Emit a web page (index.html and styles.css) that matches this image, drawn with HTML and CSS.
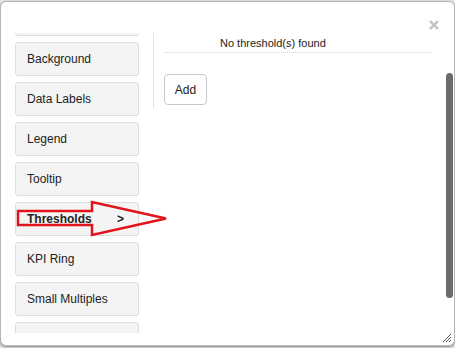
FILE: index.html
```html
<!DOCTYPE html>
<html lang="en">
<head>
    <meta charset="UTF-8">
    <meta name="viewport" content="width=device-width, initial-scale=1.0">
    <title>Format options</title>
    <link rel="stylesheet" href="styles.css">
</head>
<body>
    <div class="dialog">
        <div class="dialog-body">
            <!-- Left menu (scrolled a little, first and last items cut by the edge) -->
            <div class="nav">
                <div class="nav-list">
                    <div class="nav-item"></div>
                    <div class="nav-item">Background</div>
                    <div class="nav-item">Data Labels</div>
                    <div class="nav-item">Legend</div>
                    <div class="nav-item">Tooltip</div>
                    <div class="nav-item active">Thresholds <span class="caret">&gt;</span></div>
                    <div class="nav-item">KPI Ring</div>
                    <div class="nav-item">Small Multiples</div>
                    <div class="nav-item"></div>
                </div>
            </div>

            <!-- Right panel -->
            <div class="panel">
                <div class="empty-row">No threshold(s) found</div>
                <button class="btn-add">Add</button>
            </div>
        </div>
    </div>

    <!-- close button -->
    <svg class="close" width="10" height="10" viewBox="0 0 10 10">
        <line x1="1" y1="1" x2="9" y2="9"/>
        <line x1="9" y1="1" x2="1" y2="9"/>
    </svg>

    <!-- dialog scrollbar -->
    <div class="scroll-thumb"></div>

    <!-- resize grip -->
    <svg class="grip" width="8" height="8" viewBox="0 0 8 8">
        <line x1="0" y1="8" x2="8" y2="0"/>
        <line x1="3" y1="8" x2="8" y2="3"/>
        <line x1="6" y1="8" x2="8" y2="6"/>
    </svg>

    <!-- red annotation arrow -->
    <svg class="arrow" width="455" height="348" viewBox="0 0 455 348">
        <polygon points="18,211 92,211 92,202 166,218.5 92,235 92,225 18,225"/>
    </svg>
</body>
</html>
```

FILE: styles.css
```css
body {
    margin: 0;
    width: 455px;
    height: 348px;
    overflow: hidden;
    position: relative;
    background: #e9e9e9;
    font-family: "Liberation Sans", Arial, sans-serif;
    color: #222;
}
.dialog {
    margin-top: 1px;
    height: 345px;
    box-sizing: border-box;
    background: #fff;
    border: 1px solid #b5b5b5;
    border-radius: 6px;
    box-shadow: 0 1px 3px rgba(0, 0, 0, 0.45);
}
.dialog-body {
    display: flex;
    padding: 31px 0 0 14px;
}
.nav {
    width: 124px;
    height: 300px;
    overflow: hidden;
    flex-shrink: 0;
}
.nav-list {
    display: flex;
    flex-direction: column;
    gap: 6px;
    margin-top: -31px;
}
.nav-item {
    height: 34px;
    flex-shrink: 0;
    box-sizing: border-box;
    display: flex;
    align-items: center;
    padding: 0 14px 0 11px;
    background: #f4f4f4;
    border: 1px solid #dedede;
    border-radius: 3px;
    font-size: 12px;
}
.nav-item.active {
    font-weight: bold;
}
.caret {
    margin-left: auto;
}
.panel {
    margin-left: 14px;
    width: 268px;
    padding: 0 0 3px 10px;
    border-left: 1px solid #e2e2e2;
    align-self: flex-start;
}
.empty-row {
    height: 20px;
    line-height: 20px;
    padding-left: 56px;
    font-size: 11px;
    border-bottom: 1px dotted #d6d6d6;
    box-sizing: border-box;
}
.btn-add {
    display: block;
    margin-top: 21px;
    width: 43px;
    height: 31px;
    padding: 0;
    background: #fff;
    border: 1px solid #c8c8c8;
    border-radius: 4px;
    font-family: inherit;
    font-size: 12px;
    color: #222;
}
.close {
    position: absolute;
    left: 429px;
    top: 20px;
}
.close line {
    stroke: #c2c2c2;
    stroke-width: 2.4;
}
.scroll-thumb {
    position: absolute;
    left: 446px;
    top: 73px;
    width: 7px;
    height: 225px;
    border-radius: 4px;
    background: #6b6b6b;
}
.grip {
    position: absolute;
    left: 443px;
    top: 334px;
}
.grip line {
    stroke: #555;
    stroke-width: 1;
}
.arrow {
    position: absolute;
    left: 0;
    top: 0;
    pointer-events: none;
}
.arrow polygon {
    fill: none;
    stroke: #e3131b;
    stroke-width: 2.5;
}
```
